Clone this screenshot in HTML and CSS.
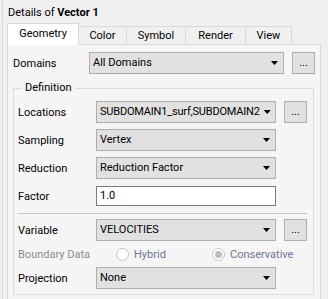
FILE: index.html
```html
<!DOCTYPE html>
<html lang="en">
<head>
    <meta charset="UTF-8">
    <meta name="viewport" content="width=device-width, initial-scale=1.0">
    <title>Details of Vector 1</title>
    <link rel="stylesheet" href="styles.css">
</head>
<body>

<div class="details">
    <div class="title">Details of <b>Vector 1</b></div>

    <div class="tabs">
        <div class="tab tab-geometry active">Geometry</div>
        <div class="tab tab-color">Color</div>
        <div class="tab tab-symbol">Symbol</div>
        <div class="tab tab-render">Render</div>
        <div class="tab tab-view">View</div>
    </div>

    <div class="pane">
        <div class="row domains-row">
            <span class="label">Domains</span>
            <div class="combo"><span class="value">All Domains</span></div>
            <div class="more">...</div>
        </div>

        <fieldset class="group">
            <legend>Definition</legend>

            <div class="row">
                <span class="label">Locations</span>
                <div class="combo"><span class="value long">SUBDOMAIN1_surf,SUBDOMAIN2</span></div>
                <div class="more">...</div>
            </div>
            <div class="row">
                <span class="label">Sampling</span>
                <div class="combo short"><span class="value">Vertex</span></div>
            </div>
            <div class="row">
                <span class="label">Reduction</span>
                <div class="combo short"><span class="value">Reduction Factor</span></div>
            </div>
            <div class="row">
                <span class="label">Factor</span>
                <div class="field short">1.0</div>
            </div>

            <div class="separator"></div>

            <div class="row variable-row">
                <span class="label">Variable</span>
                <div class="combo"><span class="value">VELOCITIES</span></div>
                <div class="more">...</div>
            </div>
            <div class="row boundary-row">
                <span class="label disabled">Boundary Data</span>
                <span class="radio hybrid"><span class="dot"></span>Hybrid</span>
                <span class="radio"><span class="dot checked"></span>Conservative</span>
            </div>
            <div class="row">
                <span class="label">Projection</span>
                <div class="combo short"><span class="value">None</span></div>
            </div>
        </fieldset>
    </div>
</div>

</body>
</html>
```

FILE: styles.css
```css
body {
    margin: 0;
    background-color: #f0f0f0;
    font-family: Roboto, "Noto Sans", sans-serif;
    font-size: 11px;
    color: #000;
}
.details {
    margin-left: 2px;
    border-left: 1px solid #d9d9d9;
    padding-left: 4px;
    height: 299px;
    width: 314px;
}
.title {
    padding: 5px 0 0 1px;
    height: 19px;
    line-height: 16px;
}
.tabs {
    display: flex;
    align-items: flex-end;
    height: 20px;
}
.tab {
    height: 17px;
    line-height: 17px;
    text-align: center;
    border: 1px solid #d9d9d9;
    border-bottom: none;
    margin-left: -1px;
    background-color: #f0f0f0;
}
.tab.active {
    height: 21px;
    margin-left: 0;
    margin-bottom: -1px;
    line-height: 20px;
    background-color: #fff;
    position: relative;
    z-index: 1;
}
.tab-geometry { width: 70px; }
.tab-color { width: 47px; }
.tab-symbol { width: 58px; }
.tab-render { width: 59px; }
.tab-view { width: 45px; }
.pane {
    border: 1px solid #d9d9d9;
    background-color: #f5f5f5;
    padding: 7px 5px 0 5px;
    height: 260px;
}
.row {
    display: flex;
    align-items: center;
    height: 22px;
    margin-bottom: 6px;
}
.label {
    width: 78px;
    flex-shrink: 0;
}
.domains-row .label {
    width: 76px;
}
.combo, .more {
    height: 20px;
    line-height: 20px;
    border: 1px solid #adadad;
    background-color: #e1e1e1;
    white-space: nowrap;
}
.combo {
    flex: 1;
    min-width: 0;
    display: flex;
    align-items: center;
    padding: 0 5px 0 3px;
}
.combo .value {
    margin-right: 4px;
}
.combo .long {
    letter-spacing: -0.2px;
}
.combo::after {
    content: "";
    flex-shrink: 0;
    width: 7px;
    height: 4px;
    margin-left: auto;
    background-color: #000;
    clip-path: polygon(0 0, 100% 0, 50% 100%);
}
.more {
    width: 21px;
    flex-shrink: 0;
    margin-left: 8px;
    text-align: center;
}
.short {
    margin-right: 31px;
}
.field {
    flex: 1;
    height: 18px;
    line-height: 18px;
    padding: 0 3px;
    border: 1px solid #7a7a7a;
    background-color: #fff;
}
.group {
    margin: 4px 1px 0 0;
    padding: 5px 6px 5px 4px;
    border: 1px solid #dcdcdc;
    min-width: 0;
}
.group legend {
    margin-left: 4px;
    padding: 0 3px;
    line-height: 16px;
}
.group .row:last-child {
    margin-bottom: 0;
}
.separator {
    height: 1px;
    background-color: #c4c4c4;
    margin: 0 0 5px 0;
}
.variable-row {
    margin-bottom: 3px;
}
.boundary-row {
    height: 20px;
    margin-bottom: 3px;
}
.disabled {
    color: #8c8c8c;
}
.radio {
    display: flex;
    align-items: center;
    color: #6f7890;
}
.radio.hybrid {
    margin-left: 20px;
    width: 96px;
}
.dot {
    width: 11px;
    height: 11px;
    border: 1px solid #c4c4c4;
    border-radius: 50%;
    background-color: #fff;
    margin-right: 5px;
    position: relative;
}
.dot.checked::after {
    content: "";
    position: absolute;
    left: 2px;
    top: 2px;
    width: 7px;
    height: 7px;
    border-radius: 50%;
    background-color: #bdbdbd;
}
```
